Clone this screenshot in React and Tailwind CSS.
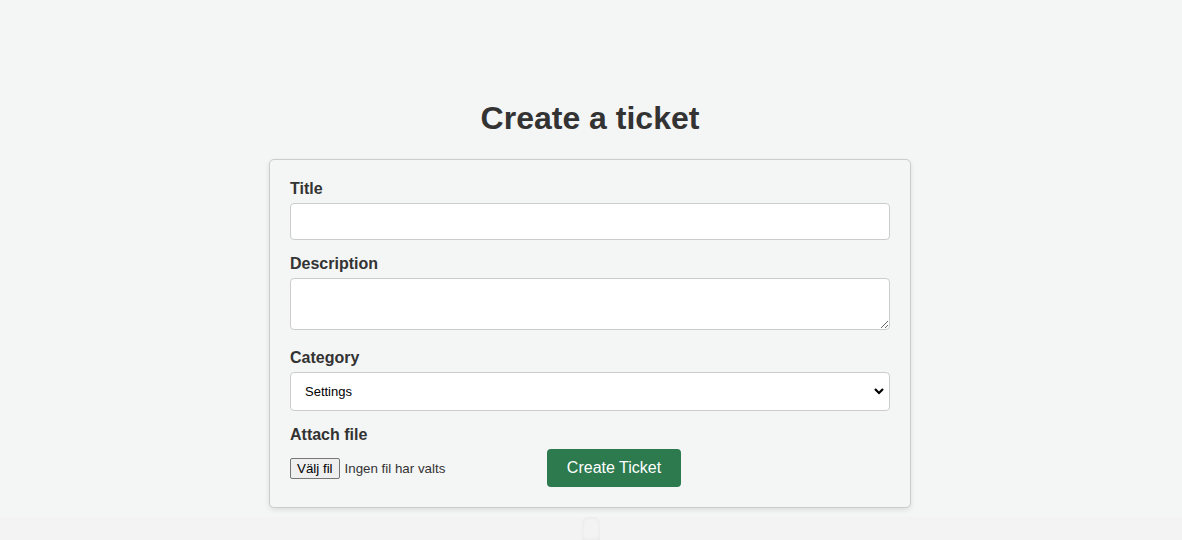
import React from 'react';

const labelCls = "block text-[16px] leading-[18px] font-bold text-[#333] mb-[5px]";
const fieldCls = "block w-full bg-white border border-[#ccc] rounded-[4px] outline-none";

const App = () => {
    return (
        <div className="min-h-[540px] bg-[#f4f5f5] flex flex-col" style={{ fontFamily: '"Liberation Sans", Arial, sans-serif' }}>
            <main className="flex flex-col items-center pt-[100px] pr-[2px]">
                <h1 className="text-[32px] leading-[37px] font-bold text-[#333] mb-[22px]">Create a ticket</h1>

                {/* Form card */}
                <form className="w-[642px] border border-[#ccc] rounded-[5px] bg-[#f4f5f5] p-[20px] shadow-[0_2px_5px_rgba(0,0,0,0.1)]">
                    <label className={labelCls}>Title</label>
                    <input type="text" className={`${fieldCls} h-[37px] px-[10px] mb-[15px]`} />

                    <label className={labelCls}>Description</label>
                    <textarea className={`${fieldCls} h-[52px] px-[10px] py-[6px] mb-[19px] resize-y`} />

                    <label className={labelCls}>Category</label>
                    <div className="relative mb-[15px]">
                        <select className={`${fieldCls} h-[39px] pl-[14px] text-[13px] text-black appearance-none`} defaultValue="settings">
                            <option value="settings">Settings</option>
                            <option value="account">Account</option>
                            <option value="other">Other</option>
                        </select>
                        <svg className="absolute right-[5px] top-[14px] pointer-events-none" width="12" height="10" viewBox="0 0 12 10">
                            <path d="M2 3 L6 7 L10 3" fill="none" stroke="#000" strokeWidth="2.2" />
                        </svg>
                    </div>

                    <label className={labelCls}>Attach file</label>
                    <div className="flex items-center">
                        <div className="w-[257px] flex items-center mt-[1px]">
                            <span className="h-[21px] px-[6px] border border-[#767676] rounded-[2px] bg-[#efefef] text-[13.33px] leading-[19px] text-black">Välj fil</span>
                            <span className="ml-[5px] text-[13.33px] text-[#333]">Ingen fil har valts</span>
                        </div>
                        <button type="button" className="h-[38px] w-[134px] rounded-[4px] bg-[#2c7a4e] text-white text-[16px]">
                            Create Ticket
                        </button>
                    </div>
                </form>
            </main>

            {/* Lower section */}
            <div className="mt-[9px] flex-1 flex bg-[#f3f3f3]">
                <div className="flex-1" />
                <div className="w-[18px] rounded-t-[6px] shadow-[inset_0_0_4px_rgba(0,0,0,0.06)]" />
                <div className="flex-1" />
            </div>
        </div>
    );
};

export default App;
